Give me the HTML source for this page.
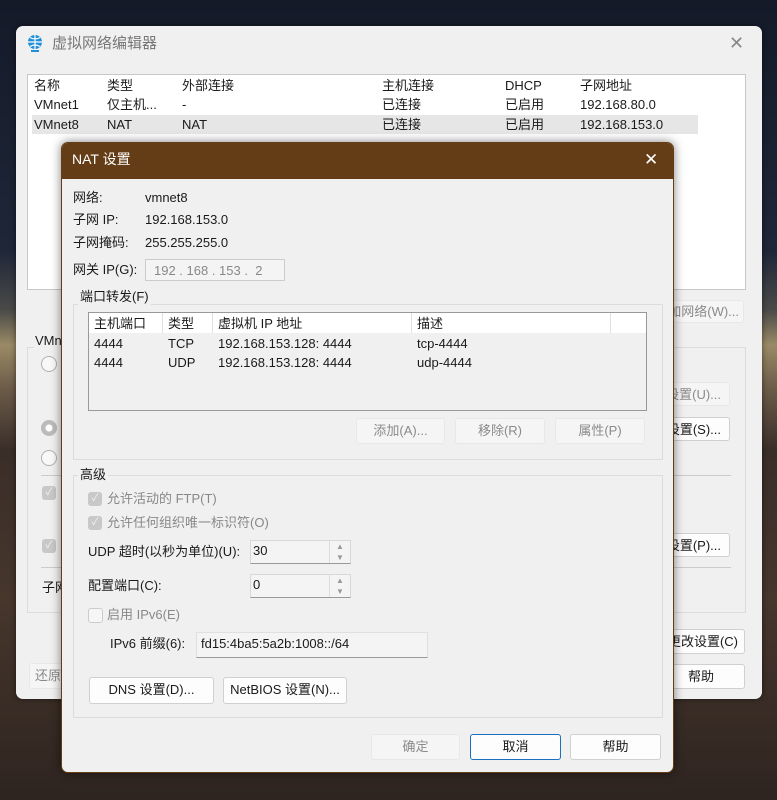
<!DOCTYPE html>
<html><head><meta charset="utf-8"><style>
*{box-sizing:border-box;margin:0;padding:0}
body{width:777px;height:800px;overflow:hidden;position:relative;font-family:"Liberation Sans","Noto Sans CJK SC",sans-serif;font-size:13px;line-height:16px;color:#1a1a1a;
background:linear-gradient(180deg,#141a28 0px,#1e2638 250px,#4a4a48 310px,#9a8a66 345px,#6a5a48 390px,#3a2e28 450px,#46362c 600px,#2e2420 800px);}
.a{position:absolute;white-space:nowrap}
.btn{position:absolute;white-space:nowrap;overflow:hidden;background:#fdfdfd;border:1px solid #d0d0d0;border-radius:3px;text-align:center;line-height:23px}
.dis{background:#f5f5f5;border-color:#e8e8e8;color:#8a8a8a}
.grp{position:absolute;border:1px solid #dcdcdc}
.cb{position:absolute;width:14px;height:14px;border-radius:3px;background:#c8c8c8;color:#f4f4f4;font-size:10px;line-height:14px;text-align:center}
.rd{position:absolute;width:16px;height:16px;border-radius:50%;border:1px solid #b0b0b0;background:#f8f8f8}
.inp{position:absolute;background:#f4f4f4;border:1px solid #d8d8d8;border-bottom:1px solid #999}
</style></head><body>
<div class="a" style="left:16px;top:26px;width:746px;height:673px;background:#f0f0f0;border-radius:7px;box-shadow:0 0 6px rgba(0,0,0,.5)"></div>
<svg class="a" style="left:26px;top:34px" width="18" height="20" viewBox="0 0 18 20"><circle cx="9" cy="8" r="7" fill="#1f8fd8"/><path d="M2 8h14M9 1v14M4 3.5q5 3 10 0M4 12.5q5-3 10 0" stroke="#fff" stroke-width="1.2" fill="none"/><rect x="5" y="16" width="8" height="2" fill="#1f8fd8"/></svg>
<div class="a" style="left:52px;top:34px;font-size:15px;line-height:19px;color:#777">虚拟网络编辑器</div>
<div class="a" style="left:729px;top:33px;font-size:18px;line-height:20px;color:#888">✕</div>
<div class="a" style="left:27px;top:74px;width:719px;height:216px;background:#fff;border:1px solid #c8c8c8"></div>
<div class="a" style="left:32px;top:115px;width:666px;height:19px;background:#e6e6e6"></div>
<div class="a" style="left:34px;top:78px">名称</div><div class="a" style="left:107px;top:78px">类型</div><div class="a" style="left:182px;top:78px">外部连接</div><div class="a" style="left:382px;top:78px">主机连接</div><div class="a" style="left:505px;top:78px">DHCP</div><div class="a" style="left:580px;top:78px">子网地址</div>
<div class="a" style="left:34px;top:97px">VMnet1</div><div class="a" style="left:107px;top:97px">仅主机...</div><div class="a" style="left:182px;top:97px">-</div><div class="a" style="left:382px;top:97px">已连接</div><div class="a" style="left:505px;top:97px">已启用</div><div class="a" style="left:580px;top:97px">192.168.80.0</div>
<div class="a" style="left:34px;top:117px">VMnet8</div><div class="a" style="left:107px;top:117px">NAT</div><div class="a" style="left:182px;top:117px">NAT</div><div class="a" style="left:382px;top:117px">已连接</div><div class="a" style="left:505px;top:117px">已启用</div><div class="a" style="left:580px;top:117px">192.168.153.0</div>
<div class="btn dis" style="left:640px;top:300px;width:104px;height:23px;line-height:21px;text-align:right;padding-right:4px">添加网络(W)...</div>
<div class="grp" style="left:27px;top:347px;width:719px;height:266px"></div>
<div class="a" style="left:34px;top:333px;background:#f0f0f0;padding:0 1px">VMnet</div>
<div class="rd" style="left:41px;top:356px"></div>
<div class="rd" style="left:41px;top:420px;border-color:#bbb;background:radial-gradient(circle,#fff 3px,#bbb 4px)"></div>
<div class="rd" style="left:41px;top:450px"></div>
<div class="a" style="left:41px;top:475px;width:690px;height:1px;background:#ccc"></div>
<div class="cb" style="left:42px;top:486px">✓</div>
<div class="cb" style="left:42px;top:539px">✓</div>
<div class="a" style="left:41px;top:567px;width:690px;height:1px;background:#ccc"></div>
<div class="a" style="left:42px;top:580px">子网</div>
<div class="btn dis" style="left:640px;top:382px;width:90px;height:24px;text-align:right;padding-right:8px">设置(U)...</div>
<div class="btn" style="left:640px;top:417px;width:90px;height:24px;text-align:right;padding-right:8px">设置(S)...</div>
<div class="btn" style="left:640px;top:533px;width:90px;height:24px;text-align:right;padding-right:8px">设置(P)...</div>
<div class="btn" style="left:640px;top:629px;width:105px;height:25px;text-align:right;padding-right:6px">更改设置(C)</div>
<div class="btn" style="left:655px;top:664px;width:90px;height:25px;text-align:right;padding-right:30px">帮助</div>
<div class="btn dis" style="left:29px;top:663px;width:50px;height:26px;text-align:left;padding-left:5px">还原</div>

<div class="a" style="left:61px;top:142px;width:613px;height:631px;background:#f0f0f0;border:1px solid #653d16;border-radius:7px;overflow:hidden;box-shadow:0 0 10px rgba(0,0,0,.5)">
<div style="height:36px;background:#643c16"></div></div>
<div class="a" style="left:72px;top:150px;font-size:14px;color:#fff;line-height:18px">NAT 设置</div>
<div class="a" style="left:644px;top:150px;font-size:17px;line-height:20px;color:#fff">✕</div>
<div class="a" style="left:73px;top:190px">网络:</div><div class="a" style="left:145px;top:190px">vmnet8</div>
<div class="a" style="left:73px;top:212px">子网 IP:</div><div class="a" style="left:145px;top:212px">192.168.153.0</div>
<div class="a" style="left:73px;top:235px">子网掩码:</div><div class="a" style="left:145px;top:235px">255.255.255.0</div>
<div class="a" style="left:73px;top:262px">网关 IP(G):</div>
<div class="a" style="left:145px;top:259px;width:140px;height:22px;border:1px solid #ccc;background:#f4f4f4;color:#888;padding:3px 8px;font-size:13px">192 . 168 . 153 .&nbsp; 2</div>
<div class="grp" style="left:73px;top:304px;width:590px;height:156px"></div>
<div class="a" style="left:78px;top:289px;background:#f0f0f0;padding:0 2px">端口转发(F)</div>
<div class="a" style="left:88px;top:312px;width:559px;height:99px;border:1px solid #999;background:#f0f0f0"></div>
<div class="a" style="left:89px;top:313px;width:557px;height:20px;background:#fff"></div>
<div class="a" style="left:162px;top:313px;width:1px;height:20px;background:#e0e0e0"></div>
<div class="a" style="left:212px;top:313px;width:1px;height:20px;background:#e0e0e0"></div>
<div class="a" style="left:411px;top:313px;width:1px;height:20px;background:#e0e0e0"></div>
<div class="a" style="left:610px;top:313px;width:1px;height:20px;background:#e0e0e0"></div>
<div class="a" style="left:94px;top:316px">主机端口</div><div class="a" style="left:168px;top:316px">类型</div><div class="a" style="left:218px;top:316px">虚拟机 IP 地址</div><div class="a" style="left:417px;top:316px">描述</div>
<div class="a" style="left:94px;top:336px">4444</div><div class="a" style="left:168px;top:336px">TCP</div><div class="a" style="left:218px;top:336px">192.168.153.128: 4444</div><div class="a" style="left:417px;top:336px">tcp-4444</div>
<div class="a" style="left:94px;top:355px">4444</div><div class="a" style="left:168px;top:355px">UDP</div><div class="a" style="left:218px;top:355px">192.168.153.128: 4444</div><div class="a" style="left:417px;top:355px">udp-4444</div>
<div class="btn dis" style="left:356px;top:418px;width:89px;height:26px">添加(A)...</div>
<div class="btn dis" style="left:455px;top:418px;width:90px;height:26px">移除(R)</div>
<div class="btn dis" style="left:555px;top:418px;width:90px;height:26px">属性(P)</div>
<div class="grp" style="left:73px;top:475px;width:590px;height:243px"></div>
<div class="a" style="left:78px;top:467px;background:#f0f0f0;padding:0 2px">高级</div>
<div class="cb" style="left:88px;top:492px">✓</div><div class="a" style="left:107px;top:491px;color:#888">允许活动的 FTP(T)</div>
<div class="cb" style="left:88px;top:516px">✓</div><div class="a" style="left:107px;top:515px;color:#888">允许任何组织唯一标识符(O)</div>
<div class="a" style="left:88px;top:544px">UDP 超时(以秒为单位)(U):</div>
<div class="inp" style="left:250px;top:540px;width:101px;height:24px"></div><div class="a" style="left:253px;top:543px">30</div>
<div class="a" style="left:329px;top:541px;width:21px;height:22px;border-left:1px solid #ddd;color:#999;font-size:8px;line-height:11px;text-align:center">▲<br>▼</div>
<div class="a" style="left:88px;top:578px">配置端口(C):</div>
<div class="inp" style="left:250px;top:574px;width:101px;height:24px"></div><div class="a" style="left:253px;top:577px">0</div>
<div class="a" style="left:329px;top:575px;width:21px;height:22px;border-left:1px solid #ddd;color:#999;font-size:8px;line-height:11px;text-align:center">▲<br>▼</div>
<div class="a" style="left:88px;top:608px;width:15px;height:15px;border:1px solid #ccc;border-radius:3px;background:#f6f6f6"></div><div class="a" style="left:107px;top:607px;color:#888">启用 IPv6(E)</div>
<div class="a" style="left:110px;top:636px">IPv6 前缀(6):</div>
<div class="inp" style="left:196px;top:632px;width:232px;height:26px;border-color:#e0e0e0;border-bottom-color:#999;padding:3px 4px">fd15:4ba5:5a2b:1008::/64</div>
<div class="btn" style="left:89px;top:677px;width:125px;height:27px">DNS 设置(D)...</div>
<div class="btn" style="left:223px;top:677px;width:124px;height:27px">NetBIOS 设置(N)...</div>
<div class="btn dis" style="left:371px;top:734px;width:89px;height:26px">确定</div>
<div class="btn" style="left:470px;top:734px;width:91px;height:26px;border:1px solid #1a6fc0">取消</div>
<div class="btn" style="left:570px;top:734px;width:91px;height:26px">帮助</div>
</body></html>
